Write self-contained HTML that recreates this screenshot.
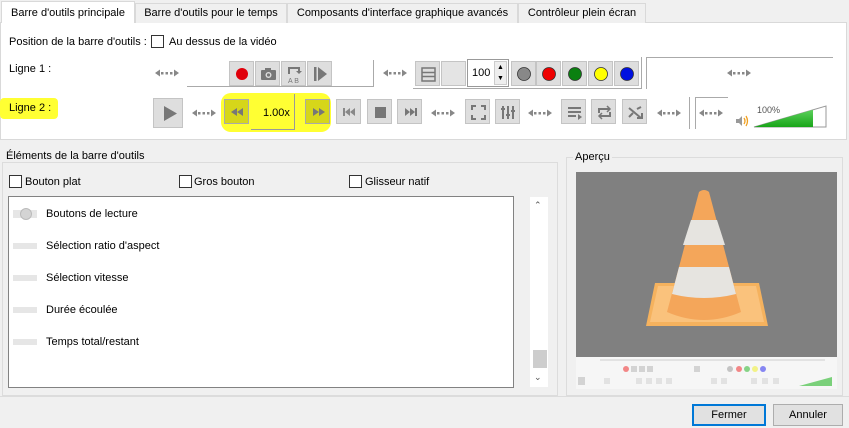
<!DOCTYPE html>
<html><head><meta charset="utf-8"><style>
*{box-sizing:border-box;margin:0;padding:0}
body{width:849px;height:428px;background:#f0f0f0;font-family:"Liberation Sans",sans-serif;font-size:11px;color:#000;position:relative;overflow:hidden}
.a{position:absolute}
.t{position:absolute;white-space:nowrap}
.tab{position:absolute;top:3px;height:20px;border:1px solid #d9d9d9;border-bottom:none;background:#f0f0f0;padding:3px 0 0 0;text-align:center}
.b{position:absolute;width:25px;height:25px;background:#dedede;border:1px solid #c4c4c4}
.b svg{position:absolute;left:0;top:0}
.cb{position:absolute;width:13px;height:13px;border:1px solid #333;background:#fff}
.ar{position:absolute;width:24px;height:8px}
.ic{position:absolute;left:13px;width:24px;height:6px;background:#e6e6e6}
</style></head><body>
<div class="a" style="left:0;top:22px;width:847px;height:118px;background:#fff;border:1px solid #d9d9d9"></div>
<div class="tab" style="left:1px;top:1px;width:134px;height:22px;background:#fff;padding-top:5px">Barre d'outils principale</div>
<div class="tab" style="left:135px;width:152px">Barre d'outils pour le temps</div>
<div class="tab" style="left:287px;width:231px">Composants d'interface graphique avancés</div>
<div class="tab" style="left:518px;width:128px">Contrôleur plein écran</div>

<div class="t" style="left:9px;top:36px">Position de la barre d'outils :</div>
<div class="cb" style="left:151px;top:35px"></div>
<div class="t" style="left:169px;top:36px">Au dessus de la vidéo</div>
<div class="t" style="left:9px;top:63px">Ligne 1 :</div>
<div class="a" style="left:0;top:98px;width:58px;height:21px;background:#ffff33;border-radius:4px"></div>
<div class="t" style="left:9px;top:102px">Ligne 2 :</div>

<svg width="0" height="0" style="position:absolute"><defs>
<g id="arw"><path d="M0 4 L5 0.5 V7.5Z M24 4 L19 0.5 V7.5Z" fill="#888"/><rect x="6" y="3" width="2.5" height="2.5" fill="#888"/><rect x="10.5" y="3" width="2.5" height="2.5" fill="#888"/><rect x="15" y="3" width="2.5" height="2.5" fill="#888"/></g>
</defs></svg>

<svg class="ar" style="left:155px;top:69px"><use href="#arw"/></svg>
<div class="a" style="left:187px;top:60px;width:187px;height:27px;border-right:1px solid #aaa;border-bottom:1px solid #aaa"></div>
<div class="b" style="left:229px;top:61px"><svg width="25" height="25"><circle cx="12" cy="12" r="6" fill="#e0000b"/></svg></div>
<div class="b" style="left:255px;top:61px"><svg width="25" height="25"><rect x="5" y="8" width="15" height="10" rx="1" fill="#777"/><rect x="9" y="6" width="6" height="3" fill="#777"/><circle cx="12.5" cy="13" r="3" fill="#dedede"/><circle cx="12.5" cy="13" r="1.6" fill="#777"/></svg></div>
<div class="b" style="left:281px;top:61px"><svg width="25" height="25"><path d="M7 12 V6 H17 V10" stroke="#777" stroke-width="2" fill="none"/><path d="M14 9 L17 12 L20 9Z" fill="#777"/><text x="6" y="21" font-size="7" fill="#777" font-family="Liberation Sans">A B</text></svg></div>
<div class="b" style="left:307px;top:61px"><svg width="25" height="25"><rect x="6" y="5" width="2.5" height="14" fill="#777"/><path d="M10 5 L19 12 L10 19Z" fill="#777"/></svg></div>
<svg class="ar" style="left:383px;top:69px"><use href="#arw"/></svg>
<div class="a" style="left:413px;top:57px;width:229px;height:32px;border-right:1px solid #aaa;border-bottom:1px solid #aaa"></div>
<div class="b" style="left:415px;top:61px"><svg width="25" height="25"><rect x="6" y="6" width="13" height="13" fill="none" stroke="#777" stroke-width="1.5"/><path d="M6 10.5H19M6 14.5H19" stroke="#777" stroke-width="1.5"/></svg></div>
<div class="b" style="left:441px;top:61px;background:#e4e4e4"></div>
<div class="a" style="left:467px;top:59px;width:42px;height:28px;background:#fff;border:1px solid #999"></div>
<div class="t" style="left:472px;top:67px">100</div>
<div class="a" style="left:494px;top:61px;width:13px;height:24px;background:#eee;border:1px solid #ccc;font-size:7px;text-align:center;line-height:11px">▲<br>▼</div>
<div class="b" style="left:511px;top:61px"><svg width="25" height="25"><circle cx="12" cy="12" r="6.5" fill="#888" stroke="#333" stroke-width=".8"/></svg></div>
<div class="b" style="left:536px;top:61px"><svg width="25" height="25"><circle cx="12" cy="12" r="6.5" fill="#e00" stroke="#333" stroke-width=".8"/></svg></div>
<div class="b" style="left:562px;top:61px"><svg width="25" height="25"><circle cx="12" cy="12" r="6.5" fill="#0a8010" stroke="#333" stroke-width=".8"/></svg></div>
<div class="b" style="left:588px;top:61px"><svg width="25" height="25"><circle cx="12" cy="12" r="6.5" fill="#ff0" stroke="#333" stroke-width=".8"/></svg></div>
<div class="b" style="left:614px;top:61px"><svg width="25" height="25"><circle cx="12" cy="12" r="6.5" fill="#0010e0" stroke="#333" stroke-width=".8"/></svg></div>
<div class="a" style="left:646px;top:57px;width:187px;height:32px;border-left:1px solid #aaa;border-top:1px solid #aaa"></div>
<svg class="ar" style="left:727px;top:69px"><use href="#arw"/></svg>

<div class="b" style="left:153px;top:98px;width:30px;height:30px"><svg width="30" height="30"><path d="M10 7 L23 14.5 L10 22Z" fill="#777"/></svg></div>
<svg class="ar" style="left:192px;top:109px"><use href="#arw"/></svg>
<div class="a" style="left:221px;top:93px;width:110px;height:39px;background:#ffff33;border-radius:10px"></div>
<div class="a" style="left:251px;top:94px;width:44px;height:36px;border-right:1px solid #999;border-bottom:1px solid #999"></div>
<div class="b" style="left:224px;top:99px;background:#d6d61a;border-color:#aaa"><svg width="25" height="25"><path d="M12 8 L6 12 L12 16Z M18 8 L12 12 L18 16Z" fill="#777"/></svg></div>
<div class="t" style="left:263px;top:107px">1.00x</div>
<div class="b" style="left:305px;top:99px;background:#d6d61a;border-color:#aaa"><svg width="25" height="25"><path d="M7 8 L13 12 L7 16Z M13 8 L19 12 L13 16Z" fill="#777"/></svg></div>
<div class="b" style="left:336px;top:99px"><svg width="25" height="25"><rect x="6" y="8" width="2" height="8" fill="#888"/><path d="M13 8 L8 12 L13 16Z M18 8 L13 12 L18 16Z" fill="#888"/></svg></div>
<div class="b" style="left:367px;top:99px"><svg width="25" height="25"><rect x="7" y="7" width="11" height="11" fill="#777"/></svg></div>
<div class="b" style="left:397px;top:99px"><svg width="25" height="25"><rect x="17" y="8" width="2" height="8" fill="#777"/><path d="M7 8 L12 12 L7 16Z M12 8 L17 12 L12 16Z" fill="#777"/></svg></div>
<svg class="ar" style="left:431px;top:109px"><use href="#arw"/></svg>
<div class="b" style="left:465px;top:99px"><svg width="25" height="25" stroke="#777" stroke-width="2" fill="none"><path d="M6 10V6H10M15 6H19V10M19 15V19H15M10 19H6V15"/></svg></div>
<div class="b" style="left:495px;top:99px"><svg width="25" height="25" stroke="#777" stroke-width="2"><path d="M7 6V19M12 6V19M17 6V19"/><path d="M5 9H9M10 15H14M15 11H19"/></svg></div>
<svg class="ar" style="left:528px;top:109px"><use href="#arw"/></svg>
<div class="b" style="left:561px;top:99px"><svg width="25" height="25" stroke="#777" stroke-width="2"><path d="M6 8H19M6 12H19M6 16H14"/><path d="M16 14L20 17L16 20Z" fill="#777" stroke="none"/></svg></div>
<div class="b" style="left:591px;top:99px"><svg width="25" height="25" stroke="#777" stroke-width="2" fill="none"><path d="M7 13V9H17M18 12V16H8"/><path d="M15 6L18 9L15 12M10 13L7 16L10 19" stroke-width="1.5"/></svg></div>
<div class="b" style="left:622px;top:99px"><svg width="25" height="25" stroke="#777" stroke-width="2" fill="none"><path d="M6 8L18 18M6 17L10 13M14 9L18 7"/><path d="M14 18H19V13" /></svg></div>
<svg class="ar" style="left:657px;top:109px"><use href="#arw"/></svg>
<div class="a" style="left:689px;top:97px;width:1px;height:32px;background:#aaa"></div>
<div class="a" style="left:695px;top:97px;width:33px;height:32px;border-left:1px solid #aaa;border-top:1px solid #aaa"></div>
<svg class="ar" style="left:699px;top:109px"><use href="#arw"/></svg>
<svg class="a" style="left:735px;top:114px" width="14" height="14"><path d="M1 5H4L7 2V12L4 9H1Z" fill="#999"/><path d="M9 4Q11 7 9 10M11 2Q14 7 11 12" stroke="#f0a020" stroke-width="1.3" fill="none"/></svg>
<svg class="a" style="left:753px;top:105px" width="76" height="24"><defs><linearGradient id="g" x1="0" y1="0" x2="0" y2="1"><stop offset="0" stop-color="#5cd05c"/><stop offset="1" stop-color="#19a519"/></linearGradient></defs><path d="M1 22 L73 1 V22Z" fill="#fff" stroke="#999"/><path d="M1 22 L60 4.8 V22Z" fill="url(#g)"/></svg>
<div class="t" style="left:757px;top:105px;font-size:9px;color:#555">100%</div>

<div class="a" style="left:2px;top:162px;width:556px;height:234px;border:1px solid #dcdcdc"></div>
<div class="t" style="left:6px;top:150px;background:#f0f0f0;padding-right:2px">Éléments de la barre d'outils</div>
<div class="cb" style="left:9px;top:175px"></div><div class="t" style="left:25px;top:176px">Bouton plat</div>
<div class="cb" style="left:179px;top:175px"></div><div class="t" style="left:194px;top:176px">Gros bouton</div>
<div class="cb" style="left:349px;top:175px"></div><div class="t" style="left:365px;top:176px">Glisseur natif</div>
<div class="a" style="left:8px;top:196px;width:506px;height:192px;background:#fff;border:1px solid #828282"></div>
<div class="a" style="left:530px;top:197px;width:18px;height:190px;background:#fff"></div>
<div class="t" style="left:534px;top:200px;font-size:9px;color:#555">⌃</div>
<div class="a" style="left:533px;top:350px;width:14px;height:18px;background:#cdcdcd"></div>
<div class="t" style="left:534px;top:372px;font-size:9px;color:#555">⌄</div>
<div class="ic" style="top:210px;height:8px"></div><div class="a" style="left:20px;top:208px;width:12px;height:12px;border-radius:6px;background:#d4d4d4;border:1px solid #bbb"></div>
<div class="t" style="left:46px;top:208px">Boutons de lecture</div>
<div class="ic" style="top:243px"></div><div class="t" style="left:46px;top:240px">Sélection ratio d'aspect</div>
<div class="ic" style="top:275px"></div><div class="t" style="left:46px;top:272px">Sélection vitesse</div>
<div class="ic" style="top:307px"></div><div class="t" style="left:46px;top:304px">Durée écoulée</div>
<div class="ic" style="top:339px"></div><div class="t" style="left:46px;top:336px">Temps total/restant</div>

<div class="a" style="left:566px;top:157px;width:277px;height:239px;border:1px solid #dcdcdc"></div>
<div class="t" style="left:573px;top:151px;background:#f0f0f0;padding:0 2px">Aperçu</div>
<div class="a" style="left:576px;top:172px;width:261px;height:185px;background:#808080"></div>
<div class="a" style="left:576px;top:357px;width:261px;height:32px;background:#f6f6f6"></div>
<div class="a" style="left:600px;top:359px;width:225px;height:2px;background:#e2e2e2"></div>
<svg class="a" style="left:576px;top:357px" width="261" height="32">
<g opacity=".45"><circle cx="50" cy="12" r="3" fill="#e00"/><rect x="55" y="9" width="6" height="6" fill="#aaa"/><rect x="63" y="9" width="6" height="6" fill="#aaa"/><rect x="71" y="9" width="6" height="6" fill="#aaa"/>
<rect x="118" y="9" width="6" height="6" fill="#aaa"/><circle cx="154" cy="12" r="3" fill="#888"/><circle cx="163" cy="12" r="3" fill="#e00"/><circle cx="171" cy="12" r="3" fill="#0a0"/><circle cx="179" cy="12" r="3" fill="#ee0"/><circle cx="187" cy="12" r="3" fill="#00e"/>
<rect x="2" y="20" width="7" height="8" fill="#aaa"/><rect x="28" y="21" width="6" height="6" fill="#ccc"/><rect x="60" y="21" width="6" height="6" fill="#ccc"/><rect x="70" y="21" width="6" height="6" fill="#ccc"/><rect x="80" y="21" width="6" height="6" fill="#ccc"/><rect x="90" y="21" width="6" height="6" fill="#ccc"/><rect x="135" y="21" width="6" height="6" fill="#ccc"/><rect x="145" y="21" width="6" height="6" fill="#ccc"/><rect x="175" y="21" width="6" height="6" fill="#ccc"/><rect x="186" y="21" width="6" height="6" fill="#ccc"/><rect x="197" y="21" width="6" height="6" fill="#ccc"/></g>
<path d="M223 29 L256 20 V29Z" fill="#7ad07a"/>
</svg>
<svg class="a" style="left:576px;top:172px" width="261" height="185">
<path d="M79 111 H183 L192 154 H70Z" fill="#f5b25e"/>
<path d="M82 114 H180 L188 150 H74Z" fill="#fac27c"/>
<path d="M123 20 Q128 16 133 20 L165 140 Q128 156 91 140Z" fill="#f4a65a"/>
<path d="M115 48 H141 L149 73 H107Z" fill="#e6e4e0"/>
<path d="M103 95 H153 L160 122 Q128 130 96 122Z" fill="#e6e4e0"/>
</svg>

<div class="a" style="left:0;top:396px;width:849px;height:1px;background:#dcdcdc"></div>
<div class="a" style="left:692px;top:404px;width:74px;height:22px;background:#e1e1e1;border:2px solid #0078d7;text-align:center;padding-top:3px">Fermer</div>
<div class="a" style="left:773px;top:404px;width:70px;height:22px;background:#e1e1e1;border:1px solid #adadad;text-align:center;padding-top:4px">Annuler</div>
</body></html>
